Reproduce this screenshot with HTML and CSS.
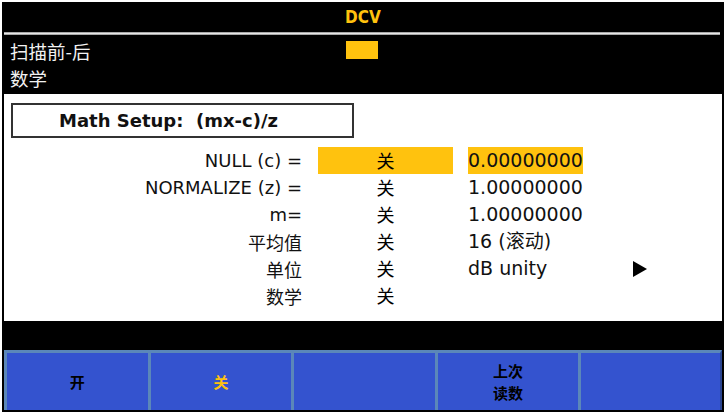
FILE: index.html
```html
<!DOCTYPE html>
<html lang="zh-CN">
<head>
  <meta charset="UTF-8">
  <title>DCV – Math Setup</title>
  <link rel="stylesheet" href="styles.css">
</head>
<body>
  <div class="screen">
    <div class="title-bar">DCV</div>
    <div class="title-rule"></div>

    <div class="status">
      <div class="status-text">
        <div class="status-main">扫描前-后</div>
        <div class="status-sub">数学</div>
      </div>
      <span class="indicator"></span>
    </div>

    <div class="panel">
      <div class="setup-box">Math Setup:&nbsp; (mx-c)/z</div>

      <div class="settings">
        <div class="label">NULL (c) =</div>
        <div class="state"><span class="state-box active">关</span></div>
        <div class="value"><span class="value-text active">0.00000000</span></div>
        <div class="more"></div>

        <div class="label">NORMALIZE (z) =</div>
        <div class="state"><span class="state-box">关</span></div>
        <div class="value"><span class="value-text">1.00000000</span></div>
        <div class="more"></div>

        <div class="label">m=</div>
        <div class="state"><span class="state-box">关</span></div>
        <div class="value"><span class="value-text">1.00000000</span></div>
        <div class="more"></div>

        <div class="label">平均值</div>
        <div class="state"><span class="state-box">关</span></div>
        <div class="value"><span class="value-text">16 (滚动)</span></div>
        <div class="more"></div>

        <div class="label">单位</div>
        <div class="state"><span class="state-box">关</span></div>
        <div class="value"><span class="value-text">dB unity</span></div>
        <div class="more"><span class="arrow"></span></div>

        <div class="label">数学</div>
        <div class="state"><span class="state-box">关</span></div>
        <div class="value"></div>
        <div class="more"></div>
      </div>
    </div>

    <div class="message-bar"></div>

    <div class="softkeys">
      <div class="softkey">开</div>
      <div class="softkey selected">关</div>
      <div class="softkey"></div>
      <div class="softkey">上次<br>读数</div>
      <div class="softkey"></div>
    </div>
  </div>
</body>
</html>
```

FILE: styles.css
```css
* {
  margin: 0;
  padding: 0;
  box-sizing: border-box;
}

:root {
  --yellow: #ffc20e;
  --key-blue: #3453cf;
  --key-edge: #5b87b9;
}

body {
  background: #ffffff;
  font-family: "DejaVu Sans", "Noto Sans CJK SC", sans-serif;
  color: #000;
}

.screen {
  width: 722px;
  margin: 2px 0 0 2px;
  padding: 0 2px 2px 2px;
  background: #000;
}

/* Title */
.title-bar {
  height: 30px;
  line-height: 30px;
  text-align: center;
  color: var(--yellow);
  font-family: "DejaVu Sans Condensed", "DejaVu Sans", sans-serif;
  font-weight: 700;
  font-size: 17px;
}

.title-rule {
  height: 3px;
  margin-right: 2px;
  background: linear-gradient(#8a8a8a, #e6e6e6 50%, #8a8a8a);
}

/* Status area */
.status {
  height: 59px;
  display: flex;
  align-items: flex-start;
  padding: 3px 0 0 6px;
}

.status-text {
  width: 336px;
  color: #f2f2f2;
  font-family: "Noto Sans CJK SC", sans-serif;
}

.status-main,
.status-sub {
  font-size: 18.5px;
  line-height: 27px;
}

.indicator {
  width: 32px;
  height: 18px;
  margin-top: 3px;
  background: var(--yellow);
}

/* White panel */
.panel {
  height: 227px;
  background: #fff;
  padding: 9px 0 0 7px;
}

.setup-box {
  width: 343px;
  height: 35px;
  border: 2px solid #333;
  padding-left: 46px;
  line-height: 31px;
  font-weight: 700;
  font-size: 18px;
  color: #111;
}

.settings {
  display: grid;
  grid-template-columns: 314px 150px 165px 40px;
  grid-auto-rows: 27px;
  margin: 9px 0 0 -7px;
  align-items: center;
}

.label {
  text-align: right;
  padding-right: 16px;
  font-size: 18px;
  color: #111;
}

.state-box {
  display: block;
  width: 135px;
  height: 27px;
  line-height: 27px;
  text-align: center;
  font-family: "Noto Sans CJK SC", sans-serif;
  font-size: 18px;
}

.value-text {
  display: inline-block;
  height: 27px;
  line-height: 27px;
  font-size: 19px;
  color: #111;
}

.value-text,
.label {
  font-family: "DejaVu Sans", "Noto Sans CJK SC", sans-serif;
}

.active {
  background: var(--yellow);
}

.arrow {
  display: block;
  width: 0;
  height: 0;
  border-top: 8px solid transparent;
  border-bottom: 8px solid transparent;
  border-left: 14px solid #000;
}

/* Message line */
.message-bar {
  height: 29px;
}

/* Soft keys */
.softkeys {
  display: grid;
  grid-template-columns: repeat(5, 1fr);
  height: 60px;
}

.softkey {
  background: var(--key-blue);
  border-top: 3px solid var(--key-edge);
  border-left: 3px solid var(--key-edge);
  display: flex;
  align-items: center;
  justify-content: center;
  text-align: center;
  font-family: "Noto Sans CJK SC", sans-serif;
  font-weight: 700;
  font-size: 15px;
  line-height: 22px;
  color: #000;
  padding-top: 1px;
}

.softkey:last-child {
  border-right: 2px solid #2b4590;
}

.softkey.selected {
  color: var(--yellow);
}
```
